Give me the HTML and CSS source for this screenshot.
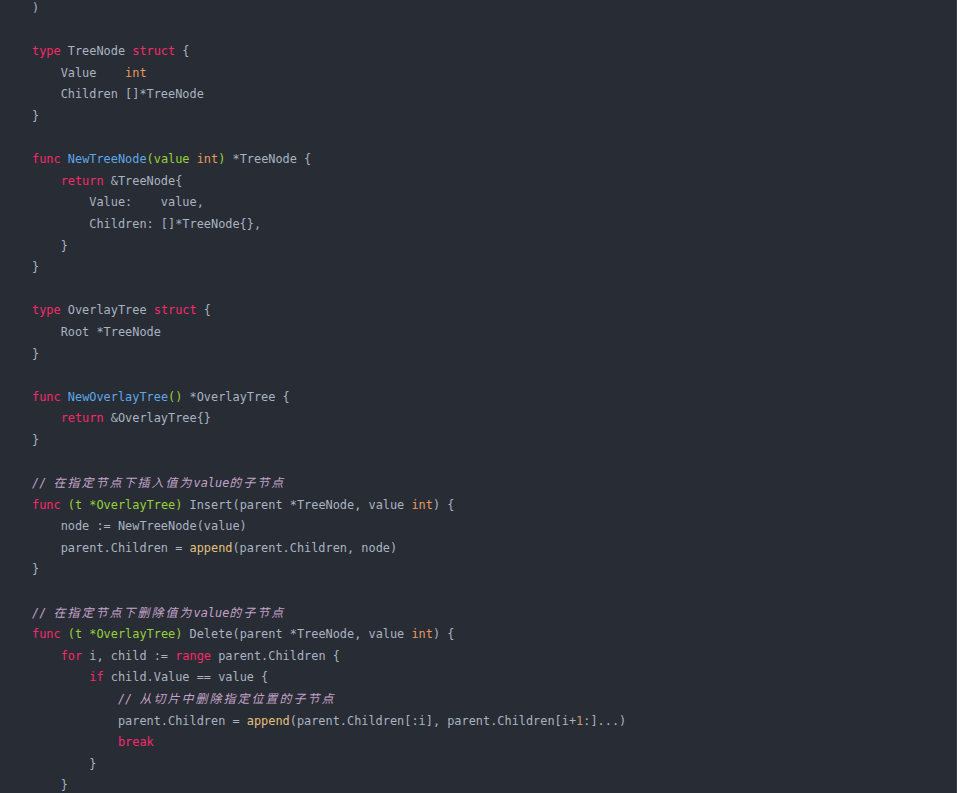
FILE: index.html
```html
<!DOCTYPE html>
<html lang="zh-CN">
<head>
    <meta charset="UTF-8">
    <meta name="viewport" content="width=device-width, initial-scale=1.0">
    <title>OverlayTree</title>
    <link rel="stylesheet" href="styles.css">
</head>
<body>
<div class="code-block">
<pre class="code"><code>)

<span class="k">type</span> TreeNode <span class="k">struct</span> {
    Value    <span class="t">int</span>
    Children []*TreeNode
}

<span class="k">func</span> <span class="f">NewTreeNode</span><span class="p">(value <span class="t">int</span>)</span> *TreeNode {
    <span class="k">return</span> &amp;TreeNode{
        Value:    value,
        Children: []*TreeNode{},
    }
}

<span class="k">type</span> OverlayTree <span class="k">struct</span> {
    Root *TreeNode
}

<span class="k">func</span> <span class="f">NewOverlayTree</span><span class="p">()</span> *OverlayTree {
    <span class="k">return</span> &amp;OverlayTree{}
}

<span class="c">// <span class="cjk">在指定节点下插入值为</span>value<span class="cjk">的子节点</span></span>
<span class="k">func</span> <span class="p">(t *OverlayTree)</span> Insert(parent *TreeNode, value <span class="t">int</span>) {
    node := NewTreeNode(value)
    parent.Children = <span class="b">append</span>(parent.Children, node)
}

<span class="c">// <span class="cjk">在指定节点下删除值为</span>value<span class="cjk">的子节点</span></span>
<span class="k">func</span> <span class="p">(t *OverlayTree)</span> Delete(parent *TreeNode, value <span class="t">int</span>) {
    <span class="k">for</span> i, child := <span class="k">range</span> parent.Children {
        <span class="k">if</span> child.Value == value {
            <span class="c">// <span class="cjk">从切片中删除指定位置的子节点</span></span>
            parent.Children = <span class="b">append</span>(parent.Children[:i], parent.Children[i+<span class="n">1</span>:]...)
            <span class="k">break</span>
        }
    }
}</code></pre>
</div>
</body>
</html>
```

FILE: styles.css
```css
html,
body {
    margin: 0;
    height: 100%;
    background-color: #282c34;
}

.code-block {
    height: 100%;
    overflow: hidden;
    border-right: 1px solid #353a45;
    box-sizing: border-box;
}

.code {
    margin: -2px 0 0 0;
    padding: 0 0 0 32px;
    font-family: "DejaVu Sans Mono", "Liberation Mono", "Noto Sans CJK SC", monospace;
    font-size: 11.9px;
    line-height: 21.6px;
    color: #a9b4c2;
    white-space: pre;
}

.k {
    color: #f8296b;
}

.f {
    color: #5ca9e8;
}

.p {
    color: #98d13b;
}

.t {
    color: #e79a5c;
}

.b {
    color: #e5c07b;
}

.n {
    color: #d19a66;
}

.c {
    color: #c3a3c8;
    font-style: italic;
}

.cjk {
    font-family: "Noto Sans CJK SC", sans-serif;
    font-size: 12px;
    line-height: 1;
    letter-spacing: 2px;
}
```
